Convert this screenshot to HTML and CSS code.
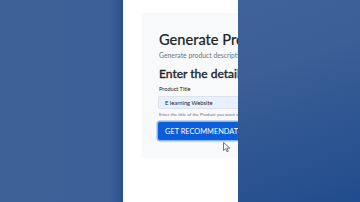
FILE: index.html
```html
<!DOCTYPE html>
<html lang="en">
<head>
    <meta charset="UTF-8">
    <meta name="viewport" content="width=device-width, initial-scale=1.0">
    <title>Product Description Generator</title>
    <link rel="stylesheet" href="styles.css">
</head>
<body>
    <div class="side left"></div>
    <div class="phone">
        <div class="card">
            <h1 class="title">Generate Product Descriptions</h1>
            <p class="subtitle">Generate product descriptions using AI</p>
            <h2 class="section">Enter the details</h2>
            <label class="label" for="title">Product Title</label>
            <input class="input" id="title" type="text" value="E learning Website">
            <p class="help">Enter the title of the Product you want a description for</p>
            <div class="actions">
                <button class="button">GET RECOMMENDATIONS</button>
                <svg class="cursor" width="8" height="11" viewBox="0 0 8 11">
                    <path d="M0.5 0.5 L0.5 8.5 L2.6 6.6 L4 9.8 L5.3 9.2 L3.9 6.1 L6.8 6.1 Z" fill="#fff" stroke="#555" stroke-width="0.8" stroke-linejoin="round"/>
                </svg>
            </div>
        </div>
    </div>
    <div class="side right"></div>
</body>
</html>
```

FILE: styles.css
```css
html, body {
    margin: 0;
    height: 100%;
}

body {
    display: flex;
    background: linear-gradient(160deg, #41679d 0%, #3b5f96 50%, #214c8d 100%);
    font-family: Lato, "Noto Sans", sans-serif;
    overflow: hidden;
}

.side {
    height: 100%;
}

.left {
    width: 122px;
    background: linear-gradient(90deg, #3e6298 0%, #3c6097 90%, #2b5190 100%);
}

.right {
    flex: 1;
}

.phone {
    width: 115px;
    height: 100%;
    background: #fff;
    overflow: hidden;
    border-left: 1px solid #2a4f8c;
}

.card {
    width: 200px;
    margin: 13px 0 0 19px;
    padding: 17px 0 18px 17px;
    background: #f8f9fa;
    box-sizing: border-box;
}

.title {
    margin: 0;
    font-size: 14.6px;
    font-weight: 500;
    line-height: 20px;
    color: #212529;
    white-space: nowrap;
    -webkit-text-stroke: 0.15px #212529;
}

.subtitle {
    margin: 0;
    font-size: 6.8px;
    line-height: 11px;
    color: #6c757d;
    white-space: nowrap;
}

.section {
    margin: 4px 0 0;
    font-size: 12px;
    font-weight: 500;
    line-height: 17px;
    color: #212529;
    white-space: nowrap;
    -webkit-text-stroke: 0.3px #212529;
}

.label {
    display: block;
    margin-top: 3px;
    font-size: 5.6px;
    line-height: 8px;
    color: #212529;
}

.input {
    display: block;
    width: 180px;
    height: 13px;
    margin: 3px 0 0 -1px;
    padding: 0 6px;
    border: 1px solid #dde3ea;
    border-radius: 2px;
    background: #e8f0fe;
    font-family: inherit;
    font-size: 5.8px;
    color: #212529;
    box-sizing: border-box;
}

.help {
    margin: 2px 0 0;
    font-size: 4.5px;
    line-height: 7px;
    color: #6c757d;
    white-space: nowrap;
}

.actions {
    position: relative;
    margin-top: 4px;
}

.button {
    display: block;
    height: 18px;
    margin-left: -1px;
    padding: 0 7px;
    border: none;
    border-radius: 2px;
    background: #0b5ed7;
    box-shadow: 0 0 0 1.5px #8bb4f5;
    color: #fff;
    font-family: inherit;
    font-size: 7.4px;
    white-space: nowrap;
}

.cursor {
    position: absolute;
    left: 64px;
    top: 20px;
}
```
